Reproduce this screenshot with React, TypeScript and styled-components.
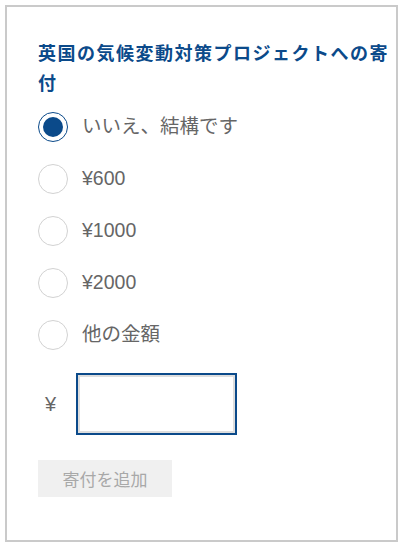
import React, { useState } from "react";
import styled, { createGlobalStyle } from "styled-components";

const GlobalStyle = createGlobalStyle`
  html, body { margin: 0; padding: 0; background: #ffffff; }
  body { font-family: "Liberation Sans", "Noto Sans CJK JP", sans-serif; }
  * { box-sizing: border-box; }
`;

const BLUE = "#0b4a8a";

const Card = styled.form`
  margin: 5px;
  width: 393px;
  height: 537px;
  border: 2px solid #cacaca;
  padding: 30px 0 0 31px;
  display: flex;
  flex-direction: column;
  align-items: flex-start;
`;

const Title = styled.h2`
  margin: 0 0 4px 0;
  font-family: "Noto Sans CJK JP", sans-serif;
  font-size: 18px;
  font-weight: 700;
  line-height: 30px;
  letter-spacing: 1.5px;
  color: ${BLUE};
`;

const Options = styled.div`
  display: flex;
  flex-direction: column;
`;

const Row = styled.label`
  height: 52px;
  display: flex;
  align-items: center;
  gap: 14px;
  cursor: pointer;
`;

const Circle = styled.span<{ $checked: boolean }>`
  width: 30px;
  height: 30px;
  border-radius: 50%;
  border: ${(p) => (p.$checked ? `1.5px solid ${BLUE}` : "1.5px solid #d2d2d2")};
  display: flex;
  align-items: center;
  justify-content: center;
  flex: none;
  &::after {
    content: "";
    width: 20px;
    height: 20px;
    border-radius: 50%;
    background: ${BLUE};
    display: ${(p) => (p.$checked ? "block" : "none")};
  }
`;

const HiddenInput = styled.input`
  position: absolute;
  opacity: 0;
  width: 0;
  height: 0;
`;

const LabelText = styled.span`
  font-family: "Liberation Sans", "Noto Sans CJK JP", sans-serif;
  font-size: 19.5px;
  color: #666666;
  line-height: 1;
`;

const AmountRow = styled.div`
  margin-top: 12px;
  display: flex;
  align-items: center;
  padding-left: 7px;
  gap: 20px;
`;

const Yen = styled.span`
  font-family: "Liberation Sans", sans-serif;
  font-size: 20px;
  color: #666666;
`;

const AmountInput = styled.input`
  width: 161px;
  height: 62px;
  border: 2px solid ${BLUE};
  box-shadow: inset 0 0 0 2px #dedede;
  outline: none;
  padding: 0 8px;
  font-size: 18px;
  font-family: "Liberation Sans", sans-serif;
  background: #ffffff;
`;

const SubmitButton = styled.button`
  margin-top: 25px;
  width: 134px;
  height: 37px;
  border: none;
  background: #f0f0f0;
  color: #a8a8a8;
  font-family: "Noto Sans CJK JP", sans-serif;
  font-size: 17px;
  padding: 0;
  cursor: default;
`;

const options = ["いいえ、結構です", "¥600", "¥1000", "¥2000", "他の金額"];

export default function App() {
  const [selected, setSelected] = useState(0);
  return (
    <>
      <GlobalStyle />
      <Card onSubmit={(e) => e.preventDefault()}>
        <Title>英国の気候変動対策プロジェクトへの寄付</Title>
        <Options>
          {options.map((o, i) => (
            <Row key={o}>
              <HiddenInput
                type="radio"
                name="donation"
                checked={selected === i}
                onChange={() => setSelected(i)}
              />
              <Circle $checked={selected === i} />
              <LabelText>{o}</LabelText>
            </Row>
          ))}
        </Options>
        <AmountRow>
          <Yen>¥</Yen>
          <AmountInput type="text" aria-label="金額" />
        </AmountRow>
        <SubmitButton type="submit" disabled>
          寄付を追加
        </SubmitButton>
      </Card>
    </>
  );
}
